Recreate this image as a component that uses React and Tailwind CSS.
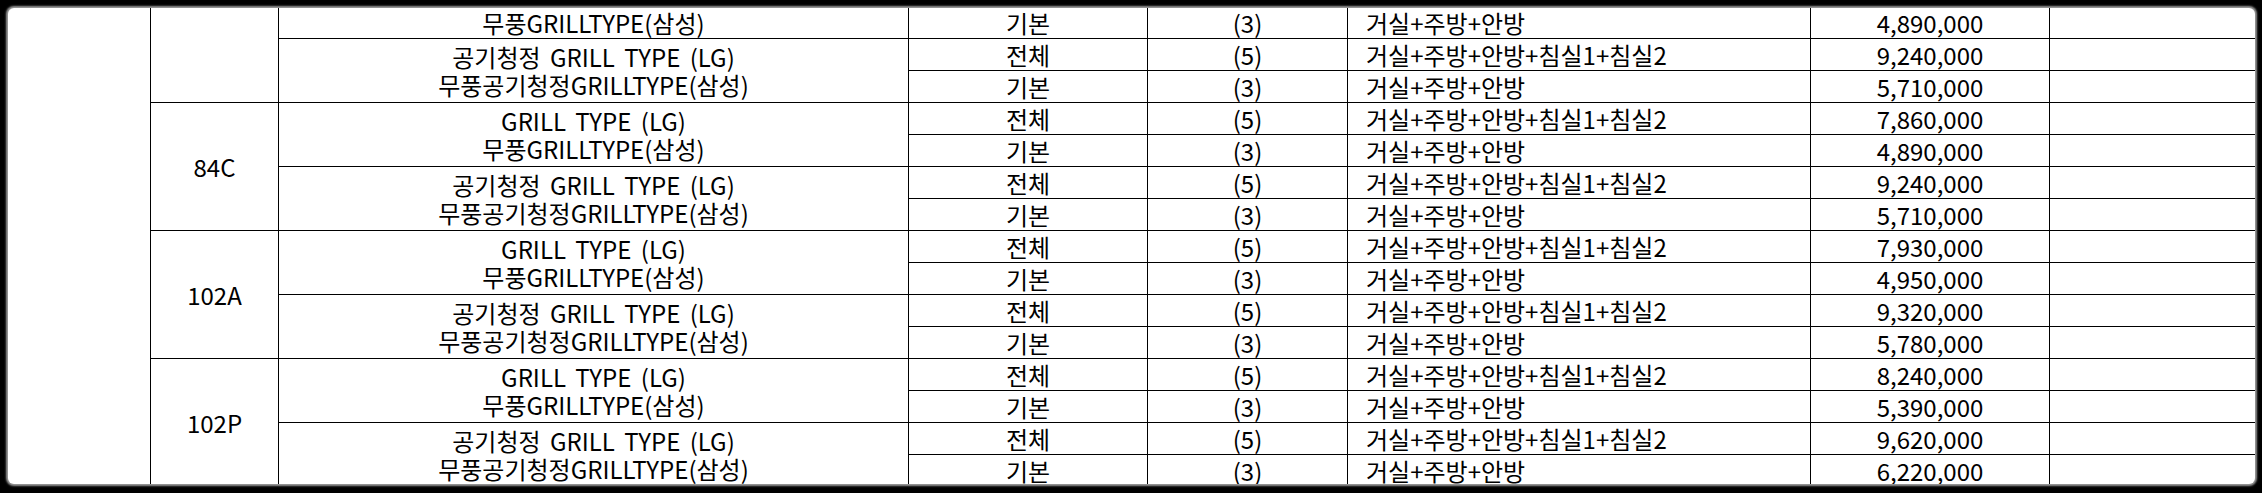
import React from "react";

const rows = [
  ["기본", "(3)", "거실+주방+안방", "4,890,000", "row-start-1"],
  ["전체", "(5)", "거실+주방+안방+침실1+침실2", "9,240,000", "row-start-2"],
  ["기본", "(3)", "거실+주방+안방", "5,710,000", "row-start-3"],
  ["전체", "(5)", "거실+주방+안방+침실1+침실2", "7,860,000", "row-start-4"],
  ["기본", "(3)", "거실+주방+안방", "4,890,000", "row-start-5"],
  ["전체", "(5)", "거실+주방+안방+침실1+침실2", "9,240,000", "row-start-6"],
  ["기본", "(3)", "거실+주방+안방", "5,710,000", "row-start-7"],
  ["전체", "(5)", "거실+주방+안방+침실1+침실2", "7,930,000", "row-start-8"],
  ["기본", "(3)", "거실+주방+안방", "4,950,000", "row-start-9"],
  ["전체", "(5)", "거실+주방+안방+침실1+침실2", "9,320,000", "row-start-10"],
  ["기본", "(3)", "거실+주방+안방", "5,780,000", "row-start-11"],
  ["전체", "(5)", "거실+주방+안방+침실1+침실2", "8,240,000", "row-start-12"],
  ["기본", "(3)", "거실+주방+안방", "5,390,000", "row-start-13"],
  ["전체", "(5)", "거실+주방+안방+침실1+침실2", "9,620,000", "row-start-14"],
  ["기본", "(3)", "거실+주방+안방", "6,220,000", "row-start-15"],
];

const AIR = ["공기청정 GRILL TYPE (LG)", "무풍공기청정GRILLTYPE(삼성)"];
const GRILL = ["GRILL TYPE (LG)", "무풍GRILLTYPE(삼성)"];
const pairs = [
  [AIR, "row-start-2"],
  [GRILL, "row-start-4"],
  [AIR, "row-start-6"],
  [GRILL, "row-start-8"],
  [AIR, "row-start-10"],
  [GRILL, "row-start-12"],
  [AIR, "row-start-14"],
];
const units = [
  { label: "", cls: "row-start-1 row-span-3" },
  { label: "84C", cls: "row-start-4 row-span-4" },
  { label: "102A", cls: "row-start-8 row-span-4" },
  { label: "102P", cls: "row-start-12 row-span-4" },
];

const cell = "border-b border-r border-black flex items-center";

export default function App() {
  return (
    <div className="w-[2262px] h-[493px] bg-black pt-[8px] pl-[8px] font-['Noto_Sans_CJK_KR','Noto_Sans',sans-serif]">
      <div className="w-[2247px] h-[476px] bg-white overflow-hidden rounded-[6px] shadow-[0_0_2px_2px_rgba(170,170,170,0.9)] text-black text-[24px] font-normal">
        <div className="grid grid-cols-[143px_128px_630px_239px_200px_463px_239px_205px] grid-rows-[31px_repeat(14,32px)]">
          <div className="border-r border-black row-start-1 row-span-15 col-start-1" />
          {units.map((u, i) => (
            <div key={"u" + i} className={cell + " col-start-2 justify-center " + u.cls}>
              {u.label}
            </div>
          ))}
          <div className={cell + " col-start-3 row-start-1 justify-center leading-none"}>
            무풍GRILLTYPE(삼성)
          </div>
          {pairs.map(([p, rs], i) => (
            <div
              key={"p" + i}
              className={cell + " col-start-3 row-span-2 flex-col justify-center text-center leading-[28px] " + rs}
            >
              <span className="[word-spacing:4px]">{p[0]}</span>
              <span>{p[1]}</span>
            </div>
          ))}
          {rows.map((r, i) => (
            <React.Fragment key={"r" + i}>
              <div className={cell + " col-start-4 justify-center leading-none " + r[4]}>{r[0]}</div>
              <div className={cell + " col-start-5 justify-center leading-none " + r[4]}>{r[1]}</div>
              <div className={cell + " col-start-6 pl-[18px] leading-none " + r[4]}>{r[2]}</div>
              <div className={cell + " col-start-7 justify-center leading-none " + r[4]}>{r[3]}</div>
              <div className={"border-b border-black col-start-8 " + r[4]} />
            </React.Fragment>
          ))}
        </div>
      </div>
    </div>
  );
}
